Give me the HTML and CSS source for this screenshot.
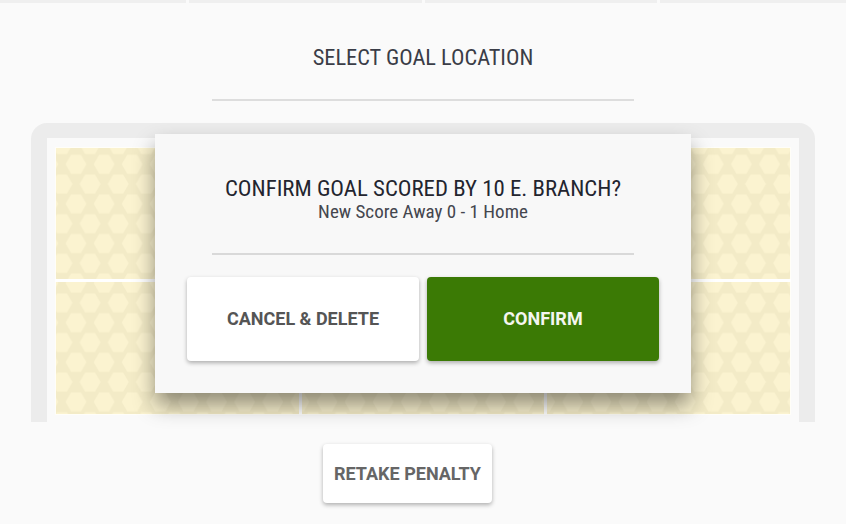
FILE: index.html
```html
<!DOCTYPE html>
<html lang="en">

<head>
    <meta charset="UTF-8">
    <meta name="viewport" content="width=device-width, initial-scale=1.0">
    <title>Select Goal Location</title>
    <link rel="stylesheet" href="styles.css">
</head>

<body>
    <div class="tabs">
        <div class="tab tab-end"></div>
        <div class="tab"></div>
        <div class="tab"></div>
        <div class="tab tab-end"></div>
    </div>

    <h2 class="title">SELECT GOAL LOCATION</h2>
    <hr class="rule">

    <div class="goal">
        <svg class="goal-field" width="736" height="268" viewBox="0 0 736 268">
            <defs>
                <pattern id="hex" patternUnits="userSpaceOnUse" width="28.1" height="39.6" x="7" y="7.3">
                    <rect width="28.1" height="39.6" fill="#f3ebc7"/>
                    <path d="M3.5 10 L9 0.5 H19 L24.5 10 L19 19.5 H9 Z" fill="#fbf3d0"/>
                    <path d="M-10.5 29.8 L-5 20.3 H5 L10.5 29.8 L5 39.3 H-5 Z" fill="#fbf3d0"/>
                    <path d="M17.6 29.8 L23.1 20.3 H33.1 L38.6 29.8 L33.1 39.3 H23.1 Z" fill="#fbf3d0"/>
                </pattern>
            </defs>
            <rect width="736" height="268" fill="#fffef8"/>
            <rect x="1" y="1" width="244" height="266" fill="url(#hex)"/>
            <rect x="246.9" y="1" width="245" height="266" fill="url(#hex)" transform="translate(-1.9 0)"/>
            <rect x="499" y="1" width="245" height="266" fill="url(#hex)" transform="translate(-9 0)"/>
            <path d="M0 133.5 H736 M245.5 0 V268 M490.5 0 V268" stroke="#ffffff" stroke-width="3" fill="none"/>
        </svg>
    </div>

    <div class="modal">
        <h2 class="modal-title">CONFIRM GOAL SCORED BY 10 E. BRANCH?</h2>
        <p class="modal-score">New Score Away 0 - 1 Home</p>
        <hr class="rule modal-rule">
        <div class="modal-buttons">
            <button type="button" class="btn btn-cancel">CANCEL &amp; DELETE</button>
            <button type="button" class="btn btn-confirm">CONFIRM</button>
        </div>
    </div>

    <div class="retake">
        <button type="button" class="btn btn-retake">RETAKE PENALTY</button>
    </div>
</body>

</html>
```

FILE: styles.css
```css
body {
    font-family: Roboto, Arial, sans-serif;
    background-color: #fafafa;
    margin: 0;
    padding: 0;
    height: 524px;
    overflow: hidden;
    position: relative;
}

.tabs {
    display: flex;
    gap: 3px;
    height: 3px;
}

.tab {
    flex: 1;
    background-color: #efefef;
}

.tab-end {
    flex: 0 0 186px;
}

.title,
.modal-title {
    margin: 0;
    font-family: Roboto, "Liberation Sans", sans-serif;
    font-stretch: condensed;
    font-weight: 400;
    text-align: center;
}

.title {
    margin-top: 41px;
    font-size: 22.4px;
    line-height: 26px;
    color: #3a3d47;
}

.rule {
    width: 422px;
    height: 2px;
    margin: 0 auto;
    border: none;
    background-color: #dddddd;
}

.title + .rule {
    margin-top: 29px;
}

.goal {
    width: 784px;
    height: 299px;
    margin: 22px auto 0;
    padding: 9px 0 0 8px;
    box-sizing: border-box;
    border: 16px solid #ececec;
    border-top-width: 15px;
    border-bottom: none;
    border-radius: 16px 16px 0 0;
    background-color: #fafafa;
}

.goal-field {
    display: block;
}

.modal {
    position: absolute;
    left: 155px;
    top: 134px;
    width: 536px;
    height: 259px;
    box-sizing: border-box;
    padding-top: 42px;
    background-color: #f8f8f8;
    box-shadow: 0 12px 20px rgba(0, 0, 0, 0.42);
}

.modal-title {
    font-size: 22.8px;
    line-height: 26px;
    color: #23252f;
}

.modal-score {
    margin: 0;
    font-stretch: condensed;
    font-size: 19px;
    line-height: 20px;
    text-align: center;
    color: #44464e;
}

.modal-rule {
    margin-top: 31px;
    background-color: #d9d9d9;
}

.modal-buttons {
    display: flex;
    gap: 8px;
    margin: 22px 32px 0;
}

.btn {
    border: none;
    border-radius: 4px;
    font-family: Roboto, Arial, sans-serif;
    font-weight: 700;
    font-size: 18px;
    cursor: pointer;
    box-shadow: 0 2px 4px rgba(0, 0, 0, 0.3);
}

.btn-cancel,
.btn-confirm {
    flex: 1;
    height: 84px;
    padding: 0 0 2px;
}

.btn-cancel {
    background-color: #ffffff;
    color: #555555;
}

.btn-confirm {
    background-color: #3b7a05;
    color: #f4f6f0;
}

.retake {
    display: flex;
    justify-content: center;
    margin-top: 22px;
    padding-right: 31px;
}

.btn-retake {
    width: 169px;
    height: 59px;
    padding: 0;
    background-color: #ffffff;
    color: #666666;
}
```
